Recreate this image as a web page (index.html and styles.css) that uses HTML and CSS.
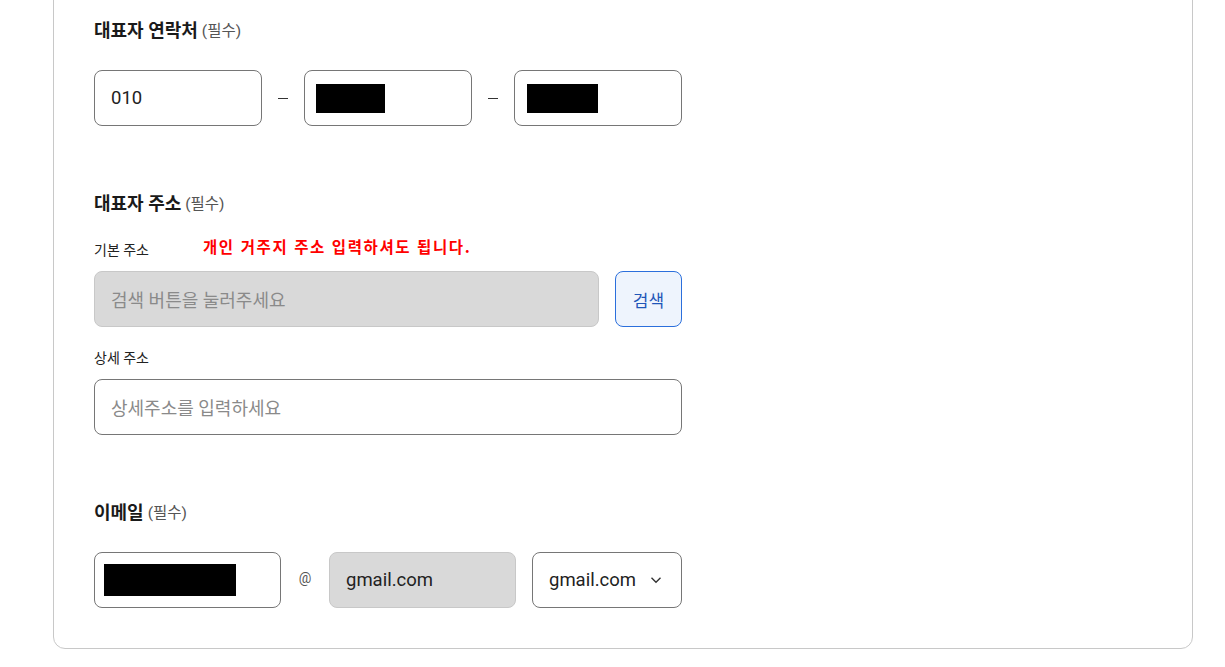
FILE: index.html
```html
<!DOCTYPE html>
<html lang="ko">
<head>
<meta charset="utf-8">
<link rel="stylesheet" href="styles.css">
</head>
<body>
<div class="card">
  <section class="section first">
    <h3 class="title">대표자 연락처 <span class="req">(필수)</span></h3>
    <div class="phone-row">
      <div class="field"><span class="value">010</span></div>
      <span class="dash"><i></i></span>
      <div class="field"><span class="redact r1"></span></div>
      <span class="dash"><i></i></span>
      <div class="field"><span class="redact r2"></span></div>
    </div>
  </section>

  <section class="section">
    <h3 class="title">대표자 주소 <span class="req">(필수)</span></h3>
    <div class="label-row">
      <span class="label">기본 주소</span>
      <span class="notice">개인 거주지 주소 입력하셔도 됩니다.</span>
    </div>
    <div class="search-row">
      <div class="field disabled wide"><span class="placeholder">검색 버튼을 눌러주세요</span></div>
      <button class="search-btn">검색</button>
    </div>
    <div class="label-row">
      <span class="label">상세 주소</span>
    </div>
    <div class="field full"><span class="placeholder">상세주소를 입력하세요</span></div>
  </section>

  <section class="section">
    <h3 class="title">이메일 <span class="req">(필수)</span></h3>
    <div class="email-row">
      <div class="field email-id"><span class="redact r3"></span></div>
      <span class="at">@</span>
      <div class="field disabled email-domain"><span class="value">gmail.com</span></div>
      <div class="field select"><span class="value">gmail.com</span>
        <svg class="chev" width="12" height="8" viewBox="0 0 12 8"><path d="M1.5 1.8 L6 6.2 L10.5 1.8" fill="none" stroke="#333" stroke-width="1.4"/></svg>
      </div>
    </div>
  </section>
</div>
</body>
</html>
```

FILE: styles.css
```css
* { box-sizing: border-box; }
html, body { margin: 0; padding: 0; background: #fff; }
body {
  font-family: Roboto, "Noto Sans CJK KR", sans-serif;
  color: #222;
  overflow: hidden;
  height: 667px;
}
.card {
  margin: -40px 0 0 53px;
  width: 1140px;
  border: 1px solid #c8c8c8;
  border-radius: 12px;
  padding: 0 40px 40px 40px;
}
.section { padding-top: 66px; }
.section.first { padding-top: 58px; }
.title {
  margin: 0;
  height: 24px;
  display: flex;
  align-items: center;
  gap: 4px;
  font-size: 18px;
  font-weight: 700;
  line-height: 24px;
  color: #1a1a1a;
}
.req {
  font-size: 15.5px;
  font-weight: 400;
  color: #555;
}
.field {
  height: 56px;
  border: 1px solid #767676;
  border-radius: 8px;
  display: flex;
  align-items: center;
  padding: 0 16px;
  font-size: 18px;
  background: #fff;
}
.value { color: #222; font-size: 18.5px; }
.placeholder { color: #8a8a8a; }
.phone-row {
  margin-top: 27px;
  display: flex;
  align-items: center;
  width: 588px;
}
.phone-row .field { width: 168px; }
.dash {
  width: 42px;
  display: flex;
  justify-content: center;
}
.dash i {
  display: block;
  width: 10px;
  height: 1px;
  background: #333;
}
.redact { display: block; background: #000; height: 29px; }
.r1 { width: 69px; margin-left: -5px; }
.r2 { width: 71px; margin-left: -4px; }
.r3 { width: 132px; height: 32px; margin-left: -7px; }
.label-row {
  display: flex;
  align-items: center;
  height: 18px;
  line-height: 18px;
  margin-top: 25px;
  margin-bottom: 12px;
}
.search-row + .label-row { margin-top: 22px; margin-bottom: 12px; }
.label {
  font-size: 14px;
  color: #222;
  width: 109px;
}
.notice {
  color: #ff0000;
  font-family: "Noto Sans CJK KR", sans-serif;
  font-weight: 700;
  font-size: 15.5px;
  letter-spacing: 1.6px;
  margin-top: -9px;
}
.field.full { width: 588px; }
.search-row {
  display: flex;
  gap: 16px;
  width: 588px;
}
.field.disabled {
  background: #d9d9d9;
  border-color: #c8c8c8;
}
.wide { flex: 1; }
.search-btn {
  width: 67px;
  height: 56px;
  border: 1px solid #2b6fdc;
  border-radius: 8px;
  background: #eef4fd;
  color: #1f56b8;
  font-family: Roboto, "Noto Sans CJK KR", sans-serif;
  font-size: 17px;
  padding: 0;
}
.email-row {
  margin-top: 27px;
  display: flex;
  align-items: center;
  width: 588px;
}
.email-id { width: 187px; }
.at {
  width: 48px;
  text-align: center;
  font-size: 14px;
  color: #555;
  margin-top: -4px;
}
.email-domain { width: 187px; }
.select {
  width: 150px;
  margin-left: 16px;
  justify-content: space-between;
  padding-right: 19px;
}
.chev { display: block; }
```
